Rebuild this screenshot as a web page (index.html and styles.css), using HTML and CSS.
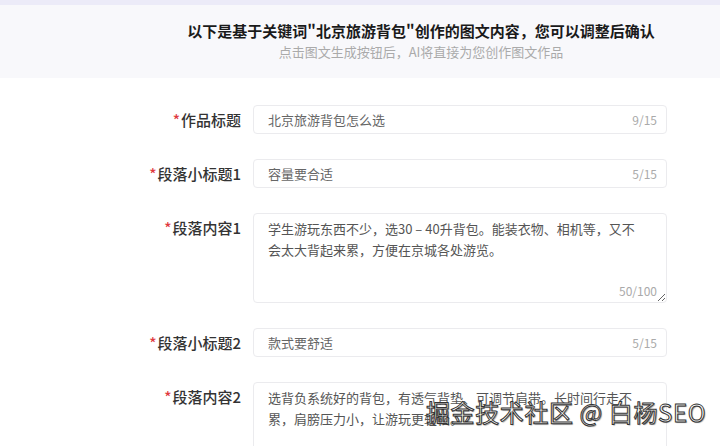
FILE: index.html
```html
<!DOCTYPE html>
<html lang="zh-CN">
<head>
  <meta charset="UTF-8">
  <title>图文内容确认</title>
  <link rel="stylesheet" href="styles.css">
</head>
<body>
  <div class="topbar"></div>
  <div class="intro">
    <h2>以下是基于关键词"北京旅游背包"创作的图文内容，您可以调整后确认</h2>
    <p>点击图文生成按钮后，AI将直接为您创作图文作品</p>
  </div>

  <div class="form">
    <label class="label" for="title"><span class="req">*</span>作品标题</label>
    <div class="field">
      <input type="text" id="title" value="北京旅游背包怎么选">
      <span class="count">9/15</span>
    </div>

    <label class="label" for="sub1"><span class="req">*</span>段落小标题1</label>
    <div class="field">
      <input type="text" id="sub1" value="容量要合适">
      <span class="count">5/15</span>
    </div>

    <label class="label" for="para1"><span class="req">*</span>段落内容1</label>
    <div class="field">
      <textarea id="para1">学生游玩东西不少，选30 – 40升背包。能装衣物、相机等，又不会太大背起来累，方便在京城各处游览。</textarea>
      <span class="count">50/100</span>
    </div>

    <label class="label" for="sub2"><span class="req">*</span>段落小标题2</label>
    <div class="field">
      <input type="text" id="sub2" value="款式要舒适">
      <span class="count">5/15</span>
    </div>

    <label class="label" for="para2"><span class="req">*</span>段落内容2</label>
    <div class="field">
      <textarea id="para2">选背负系统好的背包，有透气背垫、可调节肩带。长时间行走不累，肩膀压力小，让游玩更轻松。</textarea>
      <span class="count">46/100</span>
    </div>
  </div>

  <div class="watermark">掘金技术社区 @ 白杨SEO</div>
</body>
</html>
```

FILE: styles.css
```css
body {
  margin: 0;
  font-family: "Noto Sans CJK SC", "Noto Sans", sans-serif;
  background: #fff;
  color: #333;
  overflow: hidden;
}
.topbar {
  height: 5px;
  background: #ecebf8;
}
.intro {
  height: 73px;
  background: #f8f8fb;
  padding-left: 122px;
  text-align: center;
  box-sizing: border-box;
  padding-top: 15px;
}
.intro h2 {
  margin: 0;
  font-size: 15px;
  line-height: 22px;
  font-weight: bold;
  color: #1a1a1a;
}
.intro p {
  margin: 0;
  font-size: 13px;
  line-height: 20px;
  color: #aaa;
}
.form {
  display: grid;
  grid-template-columns: 241px 414px;
  column-gap: 12px;
  row-gap: 25px;
  padding-top: 27px;
  padding-bottom: 40px;
}
.label {
  text-align: right;
  font-size: 15px;
  line-height: 29px;
  font-weight: 500;
  color: #333;
}
.req {
  color: #e0393e;
  margin-right: 1px;
}
.field {
  position: relative;
}
input[type="text"],
textarea {
  display: block;
  width: 100%;
  box-sizing: border-box;
  border: 1px solid #ebebee;
  border-radius: 4px;
  background: #fff;
  font-family: inherit;
  font-size: 13px;
  outline: none;
}
input[type="text"] {
  height: 29px;
  padding: 0 44px 0 14px;
  color: #666;
}
textarea {
  height: 90px;
  padding: 4px 22px 4px 14px;
  line-height: 21px;
  color: #555;
  resize: vertical;
}
.count {
  position: absolute;
  right: 10px;
  top: 0;
  line-height: 29px;
  font-size: 12px;
  color: #aaa;
}
textarea + .count {
  top: auto;
  bottom: 4px;
  line-height: 16px;
}
.watermark {
  position: absolute;
  left: 426px;
  top: 396px;
  font-size: 24px;
  line-height: 32px;
  letter-spacing: 0.6px;
  color: #fff;
  -webkit-text-stroke: 1px #333;
  text-shadow: 1px 1px 1px rgba(0,0,0,0.4);
  white-space: nowrap;
}
```
